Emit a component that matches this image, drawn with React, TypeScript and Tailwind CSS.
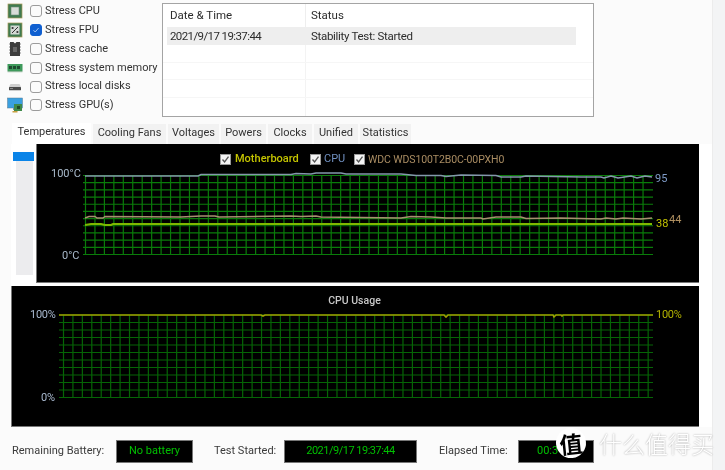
import React from 'react';

const UI_FONT = "font-['Roboto','Liberation_Sans',sans-serif]";

const stressItems = [
  { label: 'Stress CPU', icon: 'cpu', checked: false },
  { label: 'Stress FPU', icon: 'fpu', checked: true },
  { label: 'Stress cache', icon: 'cache', checked: false },
  { label: 'Stress system memory', icon: 'memory', checked: false },
  { label: 'Stress local disks', icon: 'disk', checked: false },
  { label: 'Stress GPU(s)', icon: 'gpu', checked: false },
];

const tabs = [
  { label: 'Temperatures', width: 'w-[79px]' },
  { label: 'Cooling Fans', width: 'w-[73px]' },
  { label: 'Voltages', width: 'w-[51px]' },
  { label: 'Powers', width: 'w-[45px]' },
  { label: 'Clocks', width: 'w-[44px]' },
  { label: 'Unified', width: 'w-[44px]' },
  { label: 'Statistics', width: 'w-[51px]' },
];

const StressIcon = ({ kind }: { kind: string }) => {
  if (kind === 'cpu') {
    return (
      <svg width="16" height="16" viewBox="0 0 16 16">
        <rect x="1" y="1" width="14" height="14" fill="#3f7a50" stroke="#a89a5a" strokeWidth="0.7" />
        <rect x="4" y="4" width="8" height="8" fill="#d8dcd8" stroke="#6d8a74" strokeWidth="0.6" />
      </svg>
    );
  }
  if (kind === 'fpu') {
    return (
      <svg width="16" height="16" viewBox="0 0 16 16">
        <rect x="1" y="1" width="14" height="14" fill="#3f7a50" stroke="#a89a5a" strokeWidth="0.7" />
        <rect x="3.5" y="3.5" width="9" height="9" fill="#d4d8d4" />
        <path d="M5 11 L11 5" stroke="#333" strokeWidth="1" />
        <circle cx="5.6" cy="6" r="1.1" fill="#333" />
        <circle cx="10.4" cy="10" r="1.1" fill="#333" />
      </svg>
    );
  }
  if (kind === 'cache') {
    return (
      <svg width="14" height="16" viewBox="0 0 14 16">
        <path d="M2 1 H5.5 L7 2.5 L8.5 1 H12 V15 H2 Z" fill="#3c3c3c" />
        <path d="M1 3 H2 M1 6 H2 M1 9 H2 M1 12 H2 M12 3 H13 M12 6 H13 M12 9 H13 M12 12 H13" stroke="#888" strokeWidth="1" />
        <rect x="5" y="6" width="4" height="5" fill="#666" />
      </svg>
    );
  }
  if (kind === 'memory') {
    return (
      <svg width="16" height="10" viewBox="0 0 16 10">
        <rect x="0.5" y="1" width="15" height="7" fill="#3f9a5c" />
        <path d="M2 3 H5 V6 H2 Z M6 3 H9 V6 H6 Z M10 3 H13 V6 H10 Z" fill="#1f4a30" />
        <rect x="0.5" y="8" width="15" height="1.2" fill="#8fb89a" />
      </svg>
    );
  }
  if (kind === 'disk') {
    return (
      <svg width="14" height="8" viewBox="0 0 14 8">
        <path d="M2.5 1 H11.5 L13 4 H1 Z" fill="#cfcfcf" />
        <rect x="1" y="4" width="12" height="3.2" rx="0.5" fill="#4a4a4a" />
        <rect x="2" y="5" width="3" height="1" fill="#8a8a8a" />
      </svg>
    );
  }
  return (
    <svg width="16" height="17" viewBox="0 0 16 17">
      <rect x="0.5" y="1" width="15" height="10" fill="#3aa0e0" stroke="#5a7a90" strokeWidth="0.5" />
      <rect x="6" y="11" width="4" height="2" fill="#80909a" />
      <rect x="7" y="7" width="8" height="7" fill="#3f8a4a" />
      <rect x="10" y="9" width="3" height="3" fill="#1f4a28" />
      <rect x="5.5" y="14" width="5" height="1.5" fill="#c8a040" />
    </svg>
  );
};

const Check = ({ checked }: { checked: boolean }) => (
  <span
    className={`flex h-[12px] w-[12px] shrink-0 items-center justify-center rounded-[3px] border ${
      checked ? 'border-[#0f5fd0] bg-[#0f5fd0]' : 'border-[#9c9c9c] bg-[#fbfbfb]'
    }`}
  >
    {checked && (
      <svg width="8" height="8" viewBox="0 0 8 8">
        <path d="M1.5 4.2 L3.2 6 L6.6 2" fill="none" stroke="#9cc0f0" strokeWidth="1" />
      </svg>
    )}
  </span>
);

const LegendCheck = () => (
  <span className="flex h-[11px] w-[11px] shrink-0 items-center justify-center border border-[#999] bg-[#f4f4f4]">
    <svg width="9" height="9" viewBox="0 0 9 9">
      <path d="M1.5 4.5 L3.6 7 L7.5 1.6" fill="none" stroke="#555" strokeWidth="1.3" />
    </svg>
  </span>
);

const GridLines = ({
  x1, y0, y1, tickLeft, tickRight, step, firstX, color,
}: {
  x1: number; y0: number; y1: number; tickLeft: number; tickRight: number; step: number; firstX: number; color: string;
}) => {
  const rows = Array.from({ length: 12 }, (_, i) => y0 + ((y1 - y0) * i) / 11);
  const cols: number[] = [];
  for (let x = firstX; x <= x1; x += step) cols.push(x);
  return (
    <g stroke={color} strokeWidth="1.2">
      {rows.map((y) => (
        <line key={y} x1={tickLeft} x2={tickRight} y1={y} y2={y} />
      ))}
      {cols.map((x) => (
        <line key={x} x1={x} x2={x} y1={y0} y2={y1} />
      ))}
    </g>
  );
};

// chart coordinates are page pixels
const cpuLine =
  '84,176 197,176 200,174.5 290,174.5 295,173.5 310,174 315,173 340,173 345,174 400,174 415,175.5 440,175.5 445,176.5 460,175 495,175.5 500,177 520,177 525,176 580,177 600,177 603,178 610,176 617,178 630,176 636,178 644,176 651,177';
const mbLine =
  '84,218 88,216.5 94,216.5 96,218 102,218 104,216.5 180,217 200,216 214,216 218,217 290,216 300,216.5 315,216 320,217 400,218 410,216.5 430,217 445,218 480,218 482,219 495,217 520,217 525,218.5 560,218 600,219 605,218 615,219 622,218 640,219 651,218';
const greenLine =
  '84,225 90,224 100,224 104,225 110,225 112,224 200,224 280,224 651,224';
const usageLine =
  '58,315 260,315 262,316 264,315 443,315 445,317 447,315 552,315 553,317 555,315 560,315 561,316 562,315 652,315';

const OverlayLabel = ({ className, children }: { className: string; children: React.ReactNode }) => (
  <span className={`absolute whitespace-nowrap leading-none ${className}`}>{children}</span>
);

const TemperatureChart = () => (
  <div className="relative h-[139px] w-[663px] border-b border-l border-[#777] bg-black">
    <div className="flex h-[30px] items-center pl-[183px] pt-[1px] text-[11px]">
      <LegendCheck />
      <span className="ml-[4px] w-[75px] font-medium text-[#c4c400]">Motherboard</span>
      <LegendCheck />
      <span className="ml-[3px] w-[30px] text-[#7090c0]">CPU</span>
      <LegendCheck />
      <span className="ml-[3px] text-[10.5px] tracking-[-0.1px] text-[#a98c62]">WDC WDS100T2B0C-00PXH0</span>
    </div>
    <svg className="absolute left-0 top-0" width="663" height="139" viewBox="36 144 663 139">
      <GridLines x1={651} y0={175.5} y1={254.5} tickLeft={82} tickRight={652} step={9.45} firstX={84.5} color="#0a7c0a" />
      <polyline points={mbLine} fill="none" stroke="#a89070" strokeWidth="1.4" />
      <polyline points={cpuLine} fill="none" stroke="#8498ac" strokeWidth="1.6" />
      <polyline points={greenLine} fill="none" stroke="#7fb800" strokeWidth="2" />
    </svg>
    <OverlayLabel className="left-[14px] top-[24px] text-[11px] text-[#a9bacb]">100°C</OverlayLabel>
    <OverlayLabel className="left-[25px] top-[106px] text-[11px] text-[#a9bacb]">0°C</OverlayLabel>
    <OverlayLabel className="left-[618px] top-[29px] text-[11px] text-[#7f9cc8]">95</OverlayLabel>
    <OverlayLabel className="left-[632px] top-[70px] text-[11px] text-[#b09060]">44</OverlayLabel>
    <OverlayLabel className="left-[619px] top-[74px] text-[11px] text-[#c4c400]">38</OverlayLabel>
  </div>
);

const UsageChart = () => (
  <div className="relative h-[141px] w-[688px] border-b border-l border-[#777] bg-black">
    <div className="flex h-[30px] items-center justify-center pr-[2px] text-[10.5px] font-medium text-[#c8c8c8]">CPU Usage</div>
    <svg className="absolute left-0 top-0" width="688" height="141" viewBox="11 286 688 141">
      <GridLines x1={652} y0={315} y1={397.5} tickLeft={58} tickRight={652} step={9.43} firstX={62.5} color="#066506" />
      <polyline points={usageLine} fill="none" stroke="#a0a000" strokeWidth="1.6" />
    </svg>
    <OverlayLabel className="left-[18px] top-[23px] text-[11px] tracking-[-0.3px] text-[#a9bad0]">100%</OverlayLabel>
    <OverlayLabel className="left-[29px] top-[106px] text-[11px] tracking-[-0.3px] text-[#a9bad0]">0%</OverlayLabel>
    <OverlayLabel className="left-[644px] top-[23px] text-[11px] tracking-[-0.3px] text-[#b4b400]">100%</OverlayLabel>
  </div>
);

const StatusField = ({ label, value, labelClass, boxClass, textClass }: {
  label: string; value: string; labelClass: string; boxClass: string; textClass: string;
}) => (
  <>
    <span className={`text-[11px] text-[#3a3a3a] ${labelClass}`}>{label}</span>
    <span className={`flex h-[23px] items-center border border-[#777] bg-black text-[11px] text-[#00c000] ${boxClass} ${textClass}`}>
      {value}
    </span>
  </>
);

const App: React.FC = () => {
  return (
    <div className={`relative flex h-[470px] w-[725px] overflow-hidden bg-[#f4f4f5] blur-[0.4px] ${UI_FONT}`}>
      <div className="flex w-[712px] flex-col bg-[#fbfbfb]">
        {/* top: stress options + log table */}
        <div className="flex h-[123px] items-start">
          <div className="w-[162px] pt-[2px]">
            {stressItems.map((item) => (
              <div key={item.label} className="flex h-[18.8px] items-center">
                <span className="flex w-[30px] shrink-0 items-center justify-center pl-[1px] pr-[1px]">
                  <StressIcon kind={item.icon} />
                </span>
                <Check checked={item.checked} />
                <span className="ml-[3px] whitespace-nowrap text-[11px] text-[#333]">{item.label}</span>
              </div>
            ))}
          </div>
          <div className="mt-[3px] h-[114px] w-[432px] border border-[#a4a4a4] bg-white text-[11.5px] text-[#2c2c2c]">
            <div className="flex h-[23px] items-center">
              <span className="w-[142px] pl-[7px]">Date &amp; Time</span>
              <span className="flex h-full items-center border-l border-[#eee] pl-[5px]">Status</span>
            </div>
            <div className="ml-[4px] mr-[17px] flex h-[18px] items-center bg-[#eeeeee] pt-[1px]">
              <span className="w-[138px] pl-[3px] tracking-[-0.6px]">2021/9/17 19:37:44</span>
              <span className="pl-[6px] tracking-[-0.3px]">Stability Test: Started</span>
            </div>
            {[0, 1, 2, 3].map((row) => (
              <div key={row} className="flex h-[17.7px] border-b border-[#f6f6f6] last:border-b-0">
                <span className="w-[142px]" />
                <span className="border-l border-[#f3f3f3]" />
              </div>
            ))}
          </div>
        </div>

        {/* tabs */}
        <div className="flex h-[21px] items-end gap-[2px] pl-[12px]">
          {tabs.map((tab, i) => (
            <span
              key={tab.label}
              className={`flex items-center justify-center whitespace-nowrap text-[11px] text-[#333] ${tab.width} ${
                i === 0 ? 'h-[21px] bg-white pb-[2px]' : 'h-[20px] bg-[#f2f2f2] pb-[1px]'
              }`}
            >
              {tab.label}
            </span>
          ))}
        </div>

        {/* chart panels */}
        <div className="ml-[11px] flex w-[701px] flex-col bg-white">
          <div className="flex h-[142px] items-start">
            <div className="w-[25px] pt-[8px]">
              <div className="relative ml-[5px] h-[123px] w-[17px] bg-[#ececee]">
                <span className="absolute -left-[3px] top-0 h-[9px] w-[21px] bg-[#0a84e8]" />
              </div>
            </div>
            <TemperatureChart />
          </div>
          <UsageChart />
        </div>

        {/* status bar */}
        <div className="flex flex-1 items-center pl-[12px] pt-[5px]">
          <StatusField label="Remaining Battery:" value="No battery" labelClass="w-[104px]" boxClass="w-[77px]" textClass="justify-center" />
          <span className="w-[21px]" />
          <StatusField label="Test Started:" value="2021/9/17 19:37:44" labelClass="w-[70px]" boxClass="w-[133px]" textClass="justify-center tracking-[-0.5px]" />
          <span className="w-[22px]" />
          <StatusField label="Elapsed Time:" value="00:3" labelClass="w-[79px]" boxClass="w-[76px]" textClass="pl-[18px]" />
        </div>
      </div>
      <div className="flex-1 border-l border-[#ececec] bg-[#f3f4f5]" />

      {/* site watermark */}
      <div className="absolute left-[556px] top-[428px] flex items-center">
        <span className="flex h-[30px] w-[30px] -rotate-6 items-center justify-center rounded-full bg-white font-['Noto_Sans_CJK_SC',sans-serif] text-[23px] font-bold leading-none text-black">
          值
        </span>
        <span className="ml-[13px] whitespace-nowrap font-['Noto_Sans_CJK_SC',sans-serif] text-[23px] font-light leading-none text-white [text-shadow:0_0_2px_#9a9a9a]">
          什么值得买
        </span>
      </div>
    </div>
  );
};

export default App;
